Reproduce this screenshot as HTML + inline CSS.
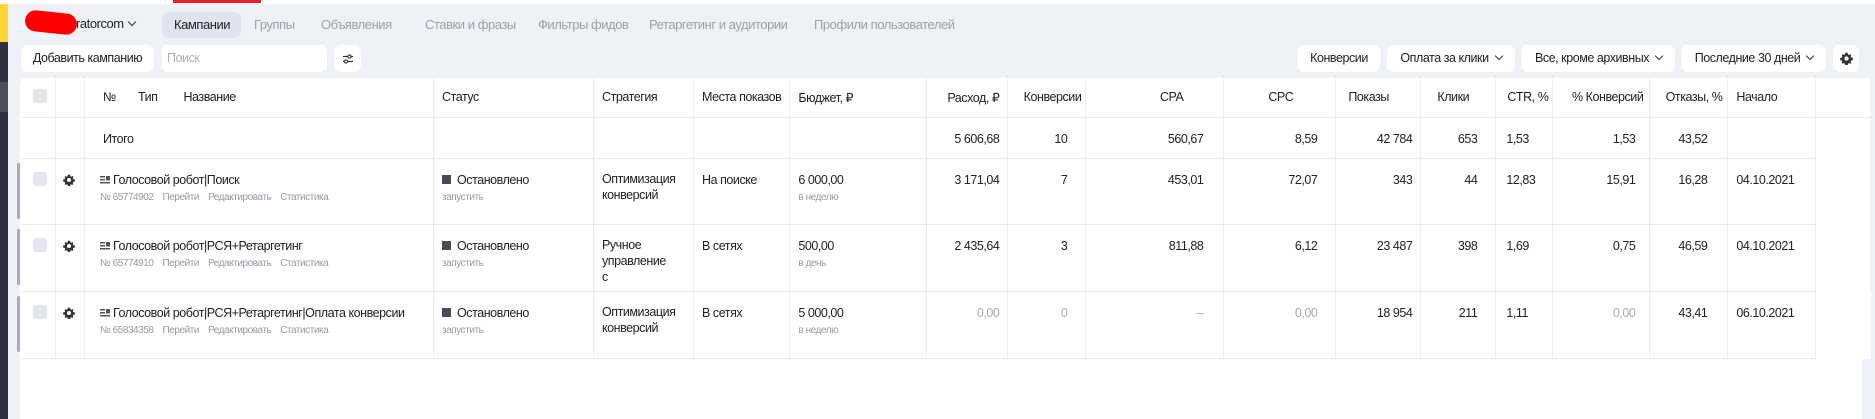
<!DOCTYPE html>
<html><head><meta charset="utf-8"><style>
*{box-sizing:border-box;margin:0;padding:0}
body{width:1875px;height:419px;overflow:hidden;background:#eef1f6;font-family:"Liberation Sans","Noto Sans CJK SC",sans-serif;color:#222;font-size:12.5px;letter-spacing:-0.45px;position:relative}
.a{position:absolute;white-space:nowrap}
.btn{position:absolute;background:#fff;border-radius:7px;height:27px;top:45px;line-height:27px;text-align:center;font-size:12.5px}
.chev{display:inline-block;width:6px;height:6px;border-right:1.2px solid #333;border-bottom:1.2px solid #333;transform:rotate(45deg);margin:0 0 3px 7px}
table{position:absolute;left:21px;top:78px;border-collapse:collapse;table-layout:fixed;background:#fff}
td{border-right:1px solid #eceef2;border-bottom:1px solid #e8ebf0;vertical-align:top;padding:14px 8px 0 8px;white-space:nowrap;overflow:hidden;font-size:12.5px}
tr.h td{padding-top:12px;vertical-align:top}
td.r{text-align:right;padding-right:18px}
.sub{font-size:10px;color:#959aa5;margin-top:5px}
.g{color:#a5abb8}
.cb{width:14px;height:14px;background:#e3e6ed;border-radius:3px;margin:-1px 0 0 2px}
.links span{margin-right:9px}
.sq{display:inline-block;width:9px;height:9px;background:#484b58;margin-right:6px;vertical-align:0px}
</style></head><body>
<svg width="0" height="0" style="position:absolute"><defs><g id="gear"><path d="M6 0.6l1.1 0.2 0.3 1.4 0.9 0.5 1.3-0.6 0.8 0.8-0.6 1.3 0.5 0.9 1.4 0.3 0.2 1.1-0.2 1.1-1.4 0.3-0.5 0.9 0.6 1.3-0.8 0.8-1.3-0.6-0.9 0.5-0.3 1.4-1.1 0.2-1.1-0.2-0.3-1.4-0.9-0.5-1.3 0.6-0.8-0.8 0.6-1.3-0.5-0.9-1.4-0.3-0.2-1.1 0.2-1.1 1.4-0.3 0.5-0.9-0.6-1.3 0.8-0.8 1.3 0.6 0.9-0.5 0.3-1.4z" fill="#333"/><circle cx="6" cy="6" r="2" fill="#fff"/></g><g id="typ"><rect x="0" y="1" width="5" height="1.5" fill="#555"/><rect x="0" y="4" width="5" height="1.5" fill="#555"/><rect x="0" y="7" width="10" height="1.5" fill="#555"/><rect x="6" y="1" width="4" height="4.5" fill="#555"/></g></defs></svg>
<div class="a" style="left:0;top:0;width:1875px;height:4px;background:#fff"></div>
<div class="a" style="left:173px;top:0;width:88px;height:3px;background:#e8202a"></div>
<div class="a" style="left:0;top:4px;width:8px;height:38px;background:#ffd633"></div>
<div class="a" style="left:0;top:42px;width:8px;height:377px;background:#2f3241"></div>
<div class="a" style="left:0;top:82px;width:8px;height:30px;background:#4a4d5a"></div>
<div class="a" style="left:20px;top:78px;width:1842px;height:341px;background:#fff;border-radius:8px 8px 0 0"></div>

<div class="a" style="left:25px;top:12px;width:52px;height:21px;background:#f00;border-radius:11px;transform:rotate(6deg)"></div>
<div class="a" style="left:76px;top:16px;font-size:13px">ratorcom<span class="chev" style="margin-left:5px"></span></div>
<div class="a" style="left:162px;top:12px;width:79px;height:26px;background:#dfe4ee;border-radius:7px"></div>
<div class="a" style="left:174px;top:17px;font-size:13px">Кампании</div>
<div class="a" style="left:254px;top:17px;font-size:13px;color:#9aa0ad">Группы</div>
<div class="a" style="left:321px;top:17px;font-size:13px;color:#9aa0ad">Объявления</div>
<div class="a" style="left:425px;top:17px;font-size:13px;color:#9aa0ad">Ставки и фразы</div>
<div class="a" style="left:538px;top:17px;font-size:13px;color:#9aa0ad">Фильтры фидов</div>
<div class="a" style="left:649px;top:17px;font-size:13px;color:#9aa0ad">Ретаргетинг и аудитории</div>
<div class="a" style="left:814px;top:17px;font-size:13px;color:#9aa0ad">Профили пользователей</div>

<div class="btn" style="left:21px;width:133px">Добавить кампанию</div>
<div class="btn" style="left:162px;width:165px;text-align:left;padding-left:5px;color:#aab0bb">Поиск</div>
<div class="btn" style="left:334px;width:27px"><svg width="12" height="12" viewBox="0 0 12 12" style="margin-top:8px"><path d="M1 3.5h10M1 8.5h10" stroke="#333" stroke-width="1.2"/><circle cx="7.5" cy="3.5" r="1.6" fill="#fff" stroke="#333" stroke-width="1.1"/><circle cx="4" cy="8.5" r="1.6" fill="#fff" stroke="#333" stroke-width="1.1"/></svg></div>
<div class="btn" style="left:1298px;width:82px">Конверсии</div>
<div class="btn" style="left:1387px;width:128px">Оплата за клики<span class="chev"></span></div>
<div class="btn" style="left:1522px;width:153px">Все, кроме архивных<span class="chev"></span></div>
<div class="btn" style="left:1682px;width:144px">Последние 30 дней<span class="chev"></span></div>
<div class="btn" style="left:1833px;width:26px"><svg width="13" height="13" viewBox="0 0 12 12" style="margin-top:7px"><use href="#gear"/></svg></div>

<table>
<colgroup><col style="width:33px"><col style="width:29px"><col style="width:349px"><col style="width:160px"><col style="width:100px"><col style="width:90px"><col style="width:137px"><col style="width:81px"><col style="width:78px"><col style="width:138px"><col style="width:112px"><col style="width:85px"><col style="width:75px"><col style="width:57px"><col style="width:97px"><col style="width:78px"><col style="width:88px"><col style="width:55px"></colgroup>
<tr class="h" style="height:39px"><td style="padding-left:10px"><div class="cb"></div></td><td></td><td style="padding-left:18px">№<span style="margin-left:22px">Тип</span><span style="margin-left:26px">Название</span></td><td>Статус</td><td>Стратегия</td><td>Места показов</td><td>Бюджет, ₽</td><td class="r" style="padding-right:8px">Расход, ₽</td><td class="r" style="padding-right:4px">Конверсии</td><td class="r" style="padding-right:40px">CPA</td><td class="r" style="padding-right:42px">CPC</td><td style="padding-left:12px">Показы</td><td style="padding-left:16px">Клики</td><td class="r" style="padding-right:4px">CTR, %</td><td class="r" style="padding-right:6px">% Конверсий</td><td class="r" style="padding-right:5px">Отказы, %</td><td>Начало</td><td></td></tr>
<tr style="height:41px"><td></td><td></td><td style="padding-left:18px">Итого</td><td></td><td></td><td></td><td></td><td class="r" style="padding-right:8px">5 606,68</td><td class="r">10</td><td class="r" style="padding-right:20px">560,67</td><td class="r">8,59</td><td class="r" style="padding-right:8px">42 784</td><td class="r">653</td><td style="padding-left:10px">1,53</td><td class="r" style="padding-right:14px">1,53</td><td class="r" style="padding-right:20px">43,52</td><td></td><td style="border-bottom:none"></td></tr>
<tr style="height:66px"><td style="padding-left:10px"><div class="cb"></div></td><td style="padding:15px 0 0 7px"><svg width="12" height="12" viewBox="0 0 12 12"><use href="#gear"/></svg></td><td style="padding-left:15px"><svg width="10" height="9" viewBox="0 0 10 9"><use href="#typ"/></svg> Голосовой робот|Поиск<div class="sub links"><span>№ 65774902</span><span>Перейти</span><span>Редактировать</span><span>Статистика</span></div></td><td><span class="sq"></span>Остановлено<div class="sub">запустить</div></td><td style="line-height:16px;padding-top:12px">Оптимизация<br>конверсий</td><td>На поиске</td><td>6 000,00<div class="sub">в неделю</div></td><td class="r" style="padding-right:8px">3 171,04</td><td class="r">7</td><td class="r" style="padding-right:20px">453,01</td><td class="r">72,07</td><td class="r" style="padding-right:8px">343</td><td class="r">44</td><td style="padding-left:10px">12,83</td><td class="r" style="padding-right:14px">15,91</td><td class="r" style="padding-right:20px">16,28</td><td>04.10.2021</td><td style="border-bottom:none"></td></tr>
<tr style="height:67px"><td style="padding-left:10px"><div class="cb"></div></td><td style="padding:15px 0 0 7px"><svg width="12" height="12" viewBox="0 0 12 12"><use href="#gear"/></svg></td><td style="padding-left:15px"><svg width="10" height="9" viewBox="0 0 10 9"><use href="#typ"/></svg> Голосовой робот|РСЯ+Ретаргетинг<div class="sub links"><span>№ 65774910</span><span>Перейти</span><span>Редактировать</span><span>Статистика</span></div></td><td><span class="sq"></span>Остановлено<div class="sub">запустить</div></td><td style="line-height:16px;padding-top:12px">Ручное<br>управление<br>с</td><td>В сетях</td><td>500,00<div class="sub">в день</div></td><td class="r" style="padding-right:8px">2 435,64</td><td class="r">3</td><td class="r" style="padding-right:20px">811,88</td><td class="r">6,12</td><td class="r" style="padding-right:8px">23 487</td><td class="r">398</td><td style="padding-left:10px">1,69</td><td class="r" style="padding-right:14px">0,75</td><td class="r" style="padding-right:20px">46,59</td><td>04.10.2021</td><td style="border-bottom:none"></td></tr>
<tr style="height:67px"><td style="padding-left:10px"><div class="cb"></div></td><td style="padding:15px 0 0 7px"><svg width="12" height="12" viewBox="0 0 12 12"><use href="#gear"/></svg></td><td style="padding-left:15px"><svg width="10" height="9" viewBox="0 0 10 9"><use href="#typ"/></svg> Голосовой робот|РСЯ+Ретаргетинг|Оплата конверсии<div class="sub links"><span>№ 65834358</span><span>Перейти</span><span>Редактировать</span><span>Статистика</span></div></td><td><span class="sq"></span>Остановлено<div class="sub">запустить</div></td><td style="line-height:16px;padding-top:12px">Оптимизация<br>конверсий</td><td>В сетях</td><td>5 000,00<div class="sub">в неделю</div></td><td class="r g" style="padding-right:8px">0,00</td><td class="r g">0</td><td class="r g" style="padding-right:20px">–</td><td class="r g">0,00</td><td class="r" style="padding-right:8px">18 954</td><td class="r">211</td><td style="padding-left:10px">1,11</td><td class="r g" style="padding-right:14px">0,00</td><td class="r" style="padding-right:20px">43,41</td><td>06.10.2021</td><td style="border-bottom:none;border-right:none"></td></tr>
</table>
<div class="a" style="left:17px;top:163px;width:3px;height:56px;background:#a9adb8;border-radius:2px"></div>
<div class="a" style="left:17px;top:229px;width:3px;height:56px;background:#a9adb8;border-radius:2px"></div>
<div class="a" style="left:17px;top:296px;width:3px;height:56px;background:#a9adb8;border-radius:2px"></div>
</body></html>
